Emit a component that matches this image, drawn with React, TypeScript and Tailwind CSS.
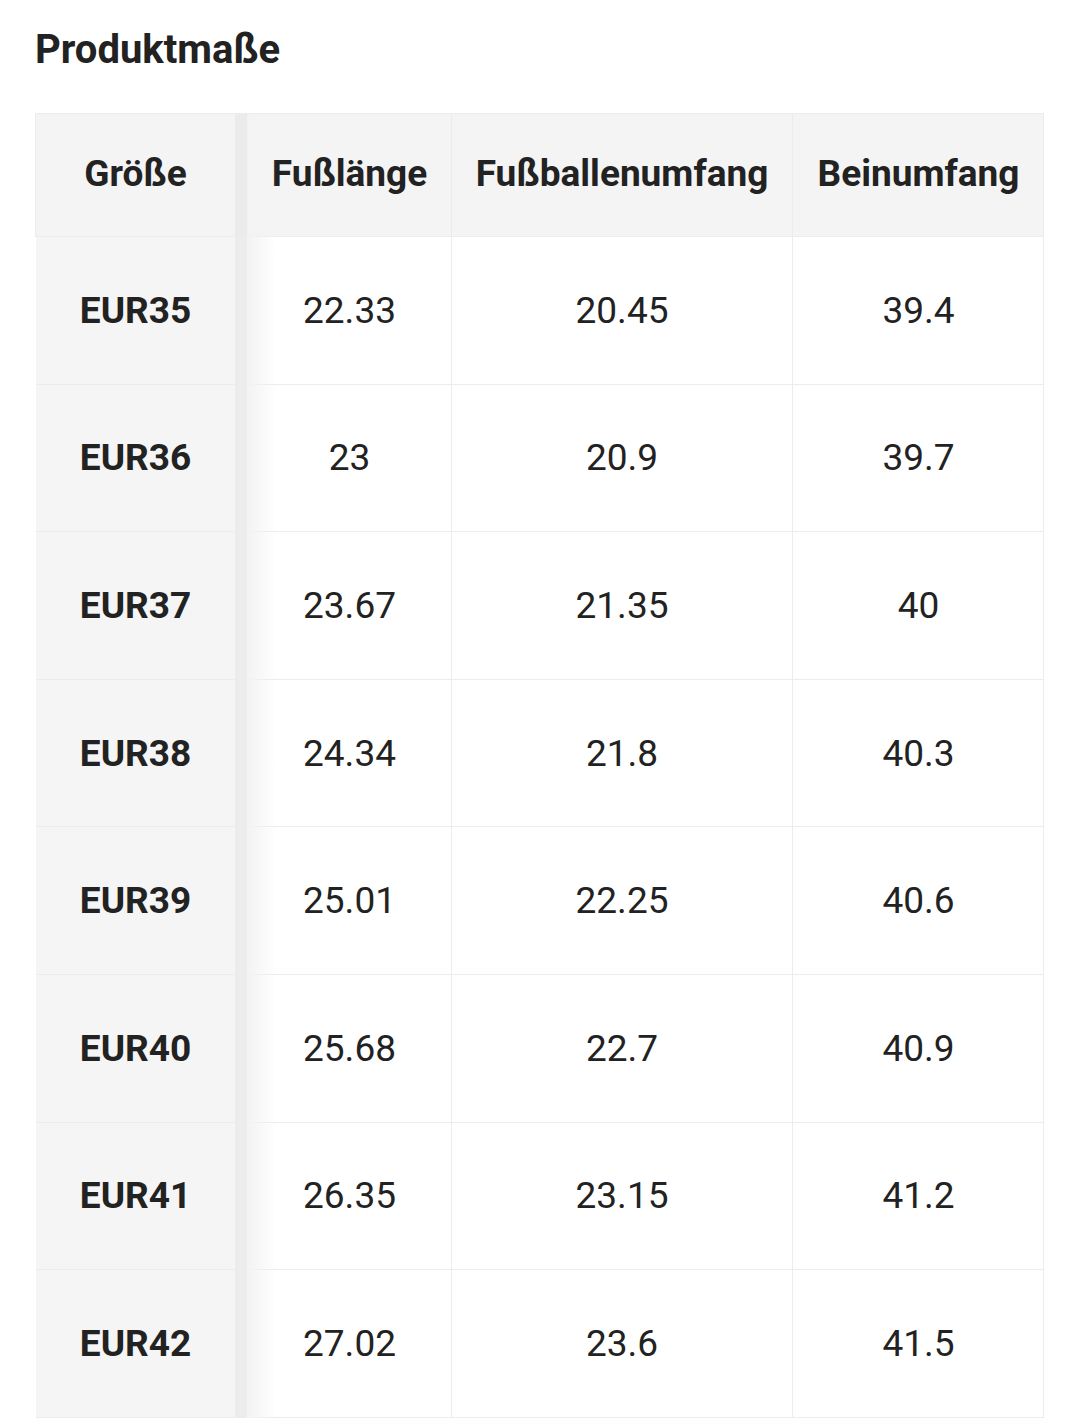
import React from "react"

const rows = [
  ["EUR35", "22.33", "20.45", "39.4"],
  ["EUR36", "23", "20.9", "39.7"],
  ["EUR37", "23.67", "21.35", "40"],
  ["EUR38", "24.34", "21.8", "40.3"],
  ["EUR39", "25.01", "22.25", "40.6"],
  ["EUR40", "25.68", "22.7", "40.9"],
  ["EUR41", "26.35", "23.15", "41.2"],
  ["EUR42", "27.02", "23.6", "41.5"],
]

const grid = "grid grid-cols-[1px_199px_13px_204px_341px_251px]"

export default function App() {
  return (
    <div className="min-h-screen bg-white text-[#222] font-['Roboto',sans-serif] pl-[35px] pt-[26px]">
      <h1 className="text-[40px] font-bold leading-[48px]">Produktmaße</h1>

      <div className="relative mt-[39px] w-[1009px] border-t border-r border-[#ececec] overflow-hidden">
        {/* header */}
        <div className={`${grid} h-[123px] bg-[#f4f4f4] border-b border-[#ececec] text-[37px] font-bold leading-none`}>
          <div className="bg-[#ececec]"></div>
          <div className="flex items-center justify-center pb-[4px]">Größe</div>
          <div className="bg-[#ebebeb] border-r border-[#f2f2f2]"></div>
          <div className="flex items-center justify-center pb-[4px] border-r border-[#ececec]">Fußlänge</div>
          <div className="flex items-center justify-center pb-[4px] border-r border-[#ececec]">Fußballenumfang</div>
          <div className="flex items-center justify-center pb-[4px]">Beinumfang</div>
        </div>

        {/* body */}
        {rows.map((r) => (
          <div key={r[0]} className={`${grid} h-[147.6px] text-[37px] leading-none`}>
            <div className="bg-white"></div>
            <div className="flex items-center justify-center bg-[#f5f5f5] font-bold border-b border-[#ececec]">
              {r[0]}
            </div>
            <div className="bg-[#ececec] border-r border-[#f4f4f4]"></div>
            <div className="flex items-center justify-center border-r border-b border-[#ececec]">{r[1]}</div>
            <div className="flex items-center justify-center border-r border-b border-[#ececec]">{r[2]}</div>
            <div className="flex items-center justify-center border-b border-[#ececec]">{r[3]}</div>
          </div>
        ))}

        {/* sticky column shadow */}
        <div className="pointer-events-none absolute top-0 bottom-0 left-[213px] w-[28px] bg-gradient-to-r from-[#f3f3f3] to-transparent"></div>
      </div>
    </div>
  )
}
